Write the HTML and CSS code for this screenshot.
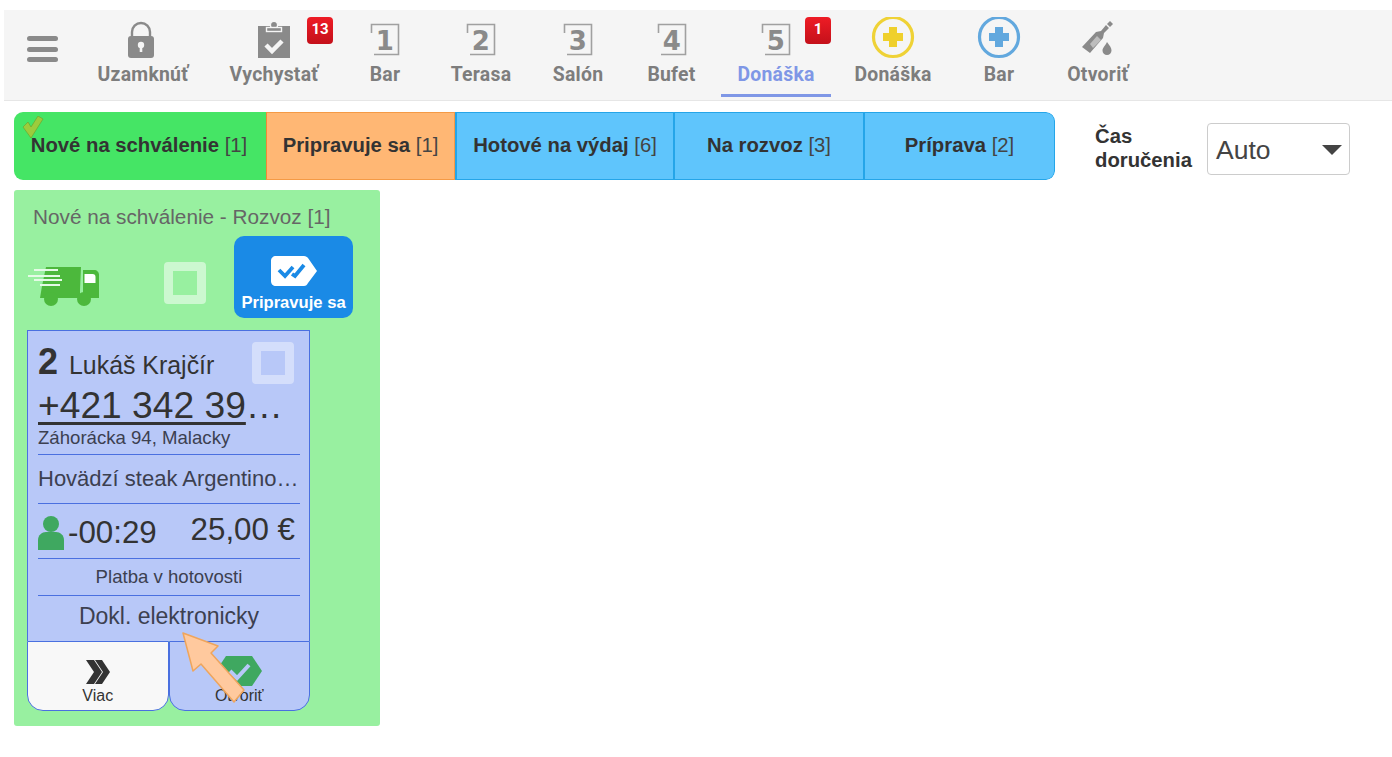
FILE: index.html
```html
<!DOCTYPE html>
<html lang="sk">
<head>
<meta charset="utf-8">
<title>Donáška</title>
<link rel="stylesheet" href="styles.css">
</head>
<body>
<nav class="toolbar">
  <div class="hamburger"><span></span><span></span><span></span></div>
  <a class="tool w-lock">
    <svg class="ico" width="40" height="40" viewBox="0 0 40 40"><path d="M9 18V12a9 9 0 0 1 18 0v6" fill="none" stroke="#8a8a8a" stroke-width="2.400"/><rect x="5" y="16" width="26" height="22" rx="3" fill="#8a8a8a"/><circle cx="18" cy="25" r="3.200" fill="#f5f5f5"/><rect x="16.700" y="26" width="2.600" height="6" fill="#f5f5f5"/></svg>
    <span>Uzamknúť</span></a>
  <a class="tool w-check">
    <svg class="ico" width="40" height="40" viewBox="0 0 40 40"><rect x="4" y="6" width="32" height="32" fill="#8a8a8a"/><path d="M4 12.500h32" stroke="#f5f5f5" stroke-width="0"/><circle cx="20" cy="5" r="3.600" fill="#8a8a8a" stroke="#f5f5f5" stroke-width="1.400"/><rect x="12.500" y="7.500" width="15" height="4" fill="#8a8a8a" stroke="#f5f5f5" stroke-width="1.400"/><path d="M12 25l6 6 10-10" fill="none" stroke="#f5f5f5" stroke-width="4.500"/></svg>
    <span>Vychystať</span><b class="badge badge-a">13</b></a>
  <a class="tool w-bar">
    <svg class="ico" width="40" height="40" viewBox="0 0 40 40"><path d="M6.500 13V4.500h27v30H9" fill="none" stroke="#a0a0a0" stroke-width="1.600"/><text x="20" y="30" class="num">1</text></svg>
    <span>Bar</span></a>
  <a class="tool w-terasa">
    <svg class="ico" width="40" height="40" viewBox="0 0 40 40"><path d="M6.500 13V4.500h27v30H9" fill="none" stroke="#a0a0a0" stroke-width="1.600"/><text x="20" y="30" class="num">2</text></svg>
    <span>Terasa</span></a>
  <a class="tool w-salon">
    <svg class="ico" width="40" height="40" viewBox="0 0 40 40"><path d="M6.500 13V4.500h27v30H9" fill="none" stroke="#a0a0a0" stroke-width="1.600"/><text x="20" y="30" class="num">3</text></svg>
    <span>Salón</span></a>
  <a class="tool w-bufet">
    <svg class="ico" width="40" height="40" viewBox="0 0 40 40"><path d="M6.500 13V4.500h27v30H9" fill="none" stroke="#a0a0a0" stroke-width="1.600"/><text x="20" y="30" class="num">4</text></svg>
    <span>Bufet</span></a>
  <a class="tool w-don active">
    <svg class="ico" width="40" height="40" viewBox="0 0 40 40"><path d="M6.500 13V4.500h27v30H9" fill="none" stroke="#a0a0a0" stroke-width="1.600"/><text x="20" y="30" class="num">5</text></svg>
    <span>Donáška</span><b class="badge badge-b">1</b></a>
  <a class="tool w-don2">
    <svg class="ico" width="44" height="44" viewBox="0 0 44 44"><circle cx="22" cy="20" r="19.500" fill="none" stroke="#efd236" stroke-width="3.200"/><path d="M18 10h8v6h6v8h-6v6h-8v-6h-6v-8h6z" fill="#efd02c"/></svg>
    <span>Donáška</span></a>
  <a class="tool w-bar2">
    <svg class="ico" width="44" height="44" viewBox="0 0 44 44"><circle cx="22" cy="20" r="19.500" fill="none" stroke="#62a8de" stroke-width="3.200"/><path d="M18 10h8v6h6v8h-6v6h-8v-6h-6v-8h6z" fill="#62a8de"/></svg>
    <span>Bar</span></a>
  <a class="tool w-open">
    <svg class="ico" width="40" height="40" viewBox="0 0 40 40"><path d="M4 27L18 12l5-1 5-6 3 3-5 5-1 5-13 15z" fill="#8a8a8a"/><path d="M29 4l3-3 3 3-3 3z" fill="#8a8a8a"/><path d="M12 24l7-8 4 4-8 8z" fill="#bdbdbd"/><path d="M29 22c3 4 4.500 6 4.500 8.500a4.500 4.500 0 0 1-9 0c0-2.500 2.500-4.500 4.500-8.500z" fill="#8a8a8a"/></svg>
    <span>Otvoriť</span></a>
</nav>

<main class="content">
  <div class="filters">
    <div class="tabs">
      <div class="tab tab-green">
        <svg class="tick" width="22" height="22" viewBox="0 0 22 22"><path d="M1 11l5-5 3 5L16 0l5 3L9 22z" fill="#9ccc3c" stroke="#6f9e28" stroke-width=".6"/></svg>
        <span><b>Nové na schválenie</b> [1]</span>
      </div>
      <div class="tab tab-orange"><span><b>Pripravuje sa</b> [1]</span></div>
      <div class="tab tab-blue t-hot"><span><b>Hotové na výdaj</b> [6]</span></div>
      <div class="tab tab-blue t-roz"><span><b>Na rozvoz</b> [3]</span></div>
      <div class="tab tab-blue t-pri"><span><b>Príprava</b> [2]</span></div>
    </div>
    <div class="delivery">
      <label class="delivery-label">Čas doručenia</label>
      <div class="select">Auto<i class="caret"></i></div>
    </div>
  </div>

  <section class="panel">
    <h2 class="panel-title">Nové na schválenie - Rozvoz [1]</h2>
    <div class="panel-actions">
      <svg class="truck" width="72" height="42" viewBox="0 0 72 42"><path d="M18 1h35l-1 23v8H12l2-12z" fill="#4cb83c"/><path d="M55 4h11c3 0 5 2 5 5v23H55z" fill="#4cb83c"/><path d="M56.500 8h8c2 0 3 1 3 3v6h-11z" fill="#fff"/><circle cx="23" cy="33" r="7" fill="#4cb83c"/><circle cx="56" cy="33" r="7" fill="#4cb83c"/><path d="M6 4h24M0 10h32M6 14h28M12 19h20" stroke="#e4fae6" stroke-width="2.200"/></svg>
      <span class="box box-panel"></span>
      <button class="ready-btn">
        <svg width="46" height="30" viewBox="0 0 46 30"><path d="M5 0h28c2 0 3 1 4 2l9 13-9 12c-1 2-2 3-4 3H5c-3 0-5-2-5-5V5c0-3 2-5 5-5z" fill="#fff"/><path d="M8 14l6 6 8-9M21 18l3 2 9-11" fill="none" stroke="#1a8ae6" stroke-width="3.800"/></svg>
        <span>Pripravuje sa</span>
      </button>
    </div>

    <article class="card">
      <div class="card-head"><strong class="order-no">2</strong><span class="name">Lukáš Krajčír</span><span class="box box-card"></span></div>
      <div class="phone"><a>+421 342 39</a>…</div>
      <div class="address">Záhorácka 94, Malacky</div>
      <div class="item">Hovädzí steak Argentino…</div>
      <div class="timing">
        <svg width="26" height="34" viewBox="0 0 26 34"><circle cx="13" cy="8" r="8" fill="#3fa860"/><path d="M0 34V24c0-5 4-8 8-8h10c4 0 8 3 8 8v10z" fill="#3fa860"/></svg>
        <span class="time">-00:29</span><span class="price">25,00 €</span>
      </div>
      <div class="pay">Platba v hotovosti</div>
      <div class="receipt">Dokl. elektronicky</div>
    </article>
    <div class="card-btns">
      <button class="card-btn btn-more">
        <svg width="26" height="24" viewBox="0 0 26 24"><path d="M1 0h8l8 12-8 12H1l8-12zM10 0h7l8 12-8 12h-7l8-12z" fill="#333"/></svg>
        <span>Viac</span>
      </button>
      <button class="card-btn btn-open">
        <svg width="46" height="30" viewBox="0 0 46 30"><path d="M10 0h26l10 15-10 15H10L0 15z" fill="#3fa860"/><path d="M14 15l7 7 12-13" fill="none" stroke="#b8c8f8" stroke-width="4"/></svg>
        <span>Otvoriť</span>
      </button>
    </div>
  </section>
</main>

<svg class="cursor" width="70" height="80" viewBox="0 0 70 80"><path d="M2 2l35 13-7 7 33 37-10 12-33-38-8 7z" fill="#ffc99e" stroke="#efa55c" stroke-width="1.500" stroke-linejoin="round"/></svg>
</body>
</html>
```

FILE: styles.css
```css
* { box-sizing: border-box; }
html, body { margin: 0; padding: 0; background: #fff; }
body { font-family: "Liberation Sans", Arial, sans-serif; color: #333; height: 757px; overflow: hidden; position: relative; }

.toolbar { display: flex; margin: 10px 0 0 4px; height: 91px; background: #f5f5f5; border-bottom: 1px solid #e6e6e6; }
.hamburger { width: 76px; display: flex; flex-direction: column; gap: 5.500px; padding: 26px 22px 0 23px; }
.hamburger span { display: block; height: 5px; border-radius: 3px; background: #8a8a8a; }
.tool { position: relative; display: flex; flex-direction: column; align-items: center; height: 88px; font: 700 19.400px Roboto, "Liberation Sans", sans-serif; letter-spacing: .25px; color: #7d7d7d; }
.tool span { position: absolute; top: 54px; left: 0; right: 0; text-align: center; line-height: 22px; }
.ico { margin-top: 10px; flex: none; }
.w-don2 .ico, .w-bar2 .ico { margin-top: 7px; }
.w-lock { width: 126px; }
.w-check { width: 136px; }
.w-bar { width: 86px; }
.w-terasa { width: 106px; }
.w-salon { width: 88px; }
.w-bufet { width: 99px; }
.w-don { width: 110px; }
.w-don2 { width: 124px; }
.w-bar2 { width: 88px; }
.w-open { width: 110px; }
.tool.active { color: #7f97e6; border-bottom: 3px solid #7f97e6; height: 87px; }
.num { font: 700 26px "DejaVu Sans", sans-serif; fill: #8a8a8a; text-anchor: middle; }
.badge { position: absolute; top: 7px; width: 26px; height: 27px; border-radius: 4px; background: linear-gradient(#ee1c25, #c4101a); color: #fff; font: 700 15px/25px Roboto, sans-serif; text-align: center; letter-spacing: 0; }
.badge-a { left: 101px; }
.badge-b { left: 84px; }

.content { padding: 11px 0 0 14px; }
.filters { display: flex; align-items: flex-start; }
.tabs { display: flex; width: 1041px; height: 68px; border-radius: 9px; overflow: hidden; flex: none; }
.tab { position: relative; display: flex; align-items: center; justify-content: center; white-space: nowrap; font-size: 20.300px; color: #444; padding-bottom: 2px; }
.tab b { font-weight: 700; color: #333; }
.tab-green { width: 252px; background: #45e565; padding-right: 2px; }
.tab-orange { width: 189px; background: #ffb774; border: 1px solid #f59a45; border-left: 1px solid #f08a35; }
.tab-blue { background: #5fc5fc; border: 1px solid #25a5e8; border-left-width: 2px; border-right: 0; }
.t-hot { width: 218px; }
.t-roz { width: 190px; }
.t-pri { width: 192px; border-right: 1px solid #25a5e8; border-radius: 0 9px 9px 0; }
.tick { position: absolute; left: 8px; top: 4px; }

.delivery { display: flex; margin: 11px 0 0 40px; }
.delivery-label { width: 112px; font-weight: 700; font-size: 20.300px; line-height: 24px; color: #333; padding-top: 1px; }
.select { position: relative; width: 143px; height: 52px; border: 1px solid #ccc; border-radius: 4px; background: #fff; font-size: 26.500px; line-height: 53px; padding-left: 8px; color: #444; }
.caret { position: absolute; right: 7px; top: 21px; border: 10px solid transparent; border-top: 10px solid #444; border-bottom: 0; }

.panel { width: 366px; height: 536px; margin-top: 10px; background: #98f0a0; border-radius: 3px; padding: 0 13px; }
.panel-title { margin: 0; padding: 15px 0 0 6px; font-size: 20.750px; font-weight: 400; line-height: 23px; color: #666; }
.panel-actions { display: flex; align-items: flex-start; height: 94px; margin-top: 8px; }
.truck { margin: 30px 0 0 1px; flex: none; }
.box { display: block; flex: none; border: 9px solid; border-radius: 4px; }
.box-panel { width: 42px; height: 42px; margin: 26px 0 0 64px; border-color: rgba(255,255,255,.5); }
.ready-btn { margin-left: 28px; width: 119px; height: 82px; border: 0; border-radius: 10px; background: #1a8ae6; color: #fff; font: 700 16.600px "Liberation Sans", sans-serif; display: flex; flex-direction: column; align-items: center; padding: 20px 0 0; }
.ready-btn span { margin-top: 7px; line-height: 20px; white-space: nowrap; }

.card { width: 283px; height: 311px; background: #b8c8f8; border: 1px solid #4a70e0; border-bottom: 0; padding: 0 9px 0 10px; color: #333; }
.card-head { position: relative; display: flex; align-items: baseline; height: 50px; padding-top: 11px; }
.order-no { font-size: 36px; line-height: 40px; }
.name { font-size: 24.900px; margin-left: 11px; }
.box-card { position: absolute; right: 6px; top: 11px; width: 42px; height: 42px; border-color: rgba(255,255,255,.4); }
.phone { font-size: 37.200px; line-height: 41px; height: 44px; white-space: nowrap; margin-top: 4px; }
.phone a { text-decoration: underline; text-decoration-thickness: 3px; text-underline-offset: 4px; }
.address { font-size: 18.600px; line-height: 21px; height: 28px; margin-top: -2px; border-bottom: 1px solid #4a70e0; color: #3c4050; }
.item { font-size: 22px; height: 49px; line-height: 48px; white-space: nowrap; border-bottom: 1px solid #4a70e0; color: #3c4050; }
.timing { display: flex; align-items: flex-start; height: 55px; border-bottom: 1px solid #4a70e0; }
.timing svg { margin-top: 12px; flex: none; }
.time { font-size: 31.300px; line-height: 34px; margin: 12px 0 0 4px; }
.price { font-size: 31.300px; line-height: 34px; margin: 9px 5px 0 auto; }
.pay { font-size: 18.600px; height: 37px; line-height: 35px; text-align: center; border-bottom: 1px solid #4a70e0; color: #3c4050; }
.receipt { font-size: 23px; line-height: 41px; text-align: center; color: #3c4050; }

.card-btns { display: flex; width: 283px; height: 70px; }
.card-btn { flex: 1; border: 1px solid #4a70e0; border-radius: 0 0 16px 16px; display: flex; flex-direction: column; align-items: center; padding: 0; font: 400 16px "Liberation Sans", sans-serif; color: #333; }
.card-btn span { line-height: 20px; margin-top: 2px; }
.btn-more { background: #f8f8f8; padding-top: 18px; }
.btn-open { background: #b8c8f8; padding-top: 14px; border-left-width: 1px; }
.btn-open span { margin-top: 0; }

.cursor { position: absolute; left: 181px; top: 631px; }
```
